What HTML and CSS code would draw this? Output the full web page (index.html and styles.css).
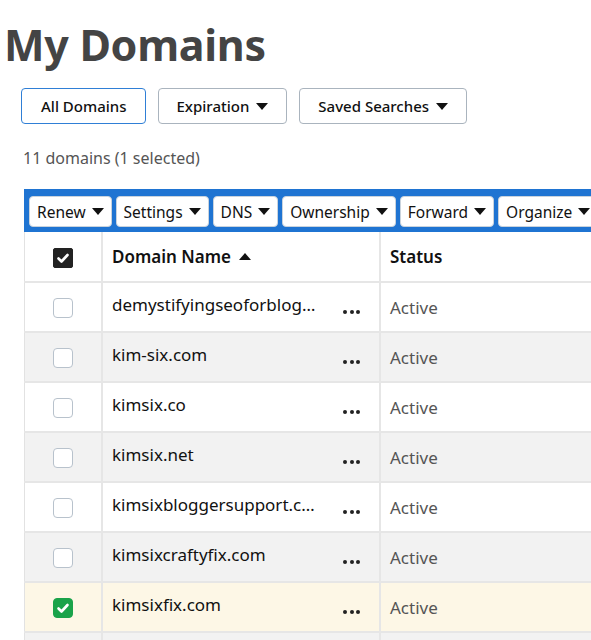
FILE: index.html
```html
<!DOCTYPE html>
<html lang="en">

<head>
    <meta charset="UTF-8">
    <meta name="viewport" content="width=device-width, initial-scale=1.0">
    <title>My Domains</title>
    <link rel="stylesheet" href="styles.css">
</head>

<body>

    <h1 class="page-title">My Domains</h1>

    <div class="filters">
        <button class="filter-btn active">All Domains</button>
        <button class="filter-btn">Expiration <span class="caret"></span></button>
        <button class="filter-btn">Saved Searches <span class="caret"></span></button>
    </div>

    <p class="count">11 domains (1 selected)</p>

    <div class="domains">
        <div class="toolbar">
            <button class="tool-btn">Renew <span class="caret"></span></button>
            <button class="tool-btn">Settings <span class="caret"></span></button>
            <button class="tool-btn">DNS <span class="caret"></span></button>
            <button class="tool-btn">Ownership <span class="caret"></span></button>
            <button class="tool-btn">Forward <span class="caret"></span></button>
            <button class="tool-btn">Organize <span class="caret"></span></button>
        </div>

        <table class="domain-table">
            <thead>
                <tr>
                    <th class="col-check"><span class="box box-all"><svg viewBox="0 0 20 20"><path d="M5.5 10.5l3 3 6-6.5" /></svg></span></th>
                    <th class="col-name">Domain Name <span class="caret up"></span></th>
                    <th class="col-status">Status</th>
                </tr>
            </thead>
            <tbody>
                <tr>
                    <td class="col-check"><span class="box"></span></td>
                    <td class="col-name"><div class="name-cell"><span class="name">demystifyingseoforblog…</span><span class="dots"><i></i><i></i><i></i></span></div></td>
                    <td class="col-status">Active</td>
                </tr>
                <tr class="alt">
                    <td class="col-check"><span class="box"></span></td>
                    <td class="col-name"><div class="name-cell"><span class="name">kim&#8209;six.com</span><span class="dots"><i></i><i></i><i></i></span></div></td>
                    <td class="col-status">Active</td>
                </tr>
                <tr>
                    <td class="col-check"><span class="box"></span></td>
                    <td class="col-name"><div class="name-cell"><span class="name">kimsix.co</span><span class="dots"><i></i><i></i><i></i></span></div></td>
                    <td class="col-status">Active</td>
                </tr>
                <tr class="alt">
                    <td class="col-check"><span class="box"></span></td>
                    <td class="col-name"><div class="name-cell"><span class="name">kimsix.net</span><span class="dots"><i></i><i></i><i></i></span></div></td>
                    <td class="col-status">Active</td>
                </tr>
                <tr>
                    <td class="col-check"><span class="box"></span></td>
                    <td class="col-name"><div class="name-cell"><span class="name">kimsixbloggersupport.c…</span><span class="dots"><i></i><i></i><i></i></span></div></td>
                    <td class="col-status">Active</td>
                </tr>
                <tr class="alt">
                    <td class="col-check"><span class="box"></span></td>
                    <td class="col-name"><div class="name-cell"><span class="name">kimsixcraftyfix.com</span><span class="dots"><i></i><i></i><i></i></span></div></td>
                    <td class="col-status">Active</td>
                </tr>
                <tr class="selected">
                    <td class="col-check"><span class="box box-on"><svg viewBox="0 0 20 20"><path d="M5.5 10.5l3 3 6-6.5" /></svg></span></td>
                    <td class="col-name"><div class="name-cell"><span class="name">kimsixfix.com</span><span class="dots"><i></i><i></i><i></i></span></div></td>
                    <td class="col-status">Active</td>
                </tr>
                <tr class="alt">
                    <td class="col-check"></td>
                    <td class="col-name"></td>
                    <td class="col-status"></td>
                </tr>
            </tbody>
        </table>
    </div>

</body>

</html>
```

FILE: styles.css
```css
body {
    font-family: "Noto Sans", Arial, sans-serif;
    background-color: #fff;
    color: #111;
    margin: 0;
    padding: 0 0 0 4px;
    overflow: hidden;
}

.page-title {
    font-size: 43px;
    font-weight: 700;
    color: #444;
    margin: 16px 0 0 0;
    line-height: 58px;
    letter-spacing: -0.3px;
}

.filters {
    display: flex;
    gap: 12px;
    margin: 14px 0 0 17px;
}

.filter-btn {
    font-family: inherit;
    font-size: 15px;
    font-weight: 500;
    color: #111;
    background: #fff;
    border: 1px solid #aab4be;
    border-radius: 4px;
    height: 36px;
    padding: 0 18px;
    display: flex;
    align-items: center;
    gap: 7px;
}

.filter-btn.active {
    border-color: #2f7fd6;
    padding: 0 18px 0 19px;
}

.caret {
    display: inline-block;
    width: 0;
    height: 0;
    border-left: 6px solid transparent;
    border-right: 6px solid transparent;
    border-top: 7px solid #111;
}

.caret.up {
    border-top: none;
    border-bottom: 7px solid #111;
    margin-left: 4px;
    vertical-align: 3px;
}

.count {
    font-size: 16px;
    color: #555;
    margin: 22px 0 0 19px;
    line-height: 24px;
}

.domains {
    margin: 19px 0 0 20px;
}

.toolbar {
    background-color: #1f74d2;
    display: flex;
    gap: 4px;
    padding: 7px 5px 5px 5px;
    height: 31px;
    white-space: nowrap;
}

.tool-btn {
    font-family: inherit;
    font-size: 15.5px;
    color: #111;
    background: #fff;
    border: 1px solid #c9d3dd;
    border-radius: 4px;
    height: 31px;
    padding: 0 7px;
    display: flex;
    align-items: center;
    gap: 6px;
    flex-shrink: 0;
}

.domain-table {
    width: 620px;
    border-collapse: collapse;
    table-layout: fixed;
}

.domain-table th,
.domain-table td {
    height: 48px;
    padding: 0;
    border-top: 2px solid #e6e6e6;
    text-align: left;
    vertical-align: middle;
}

.domain-table thead th {
    border-top: none;
    height: 49px;
    font-size: 17px;
    font-weight: 600;
    color: #111;
}

.col-check {
    width: 76px;
    text-align: center !important;
    border-left: 1px solid #e2e2e2;
    border-right: 2px solid #e6e6e6;
}

.col-name {
    width: 267px;
    padding-left: 9px !important;
    border-right: 2px solid #e6e6e6;
}

.col-status {
    padding-left: 9px !important;
    font-size: 17px;
    color: #555;
}

.domain-table thead .col-status {
    color: #111;
}

tr.alt td {
    background-color: #f2f2f2;
}

tr.selected td {
    background-color: #fdf7e6;
}

.box {
    display: inline-block;
    width: 20px;
    height: 20px;
    box-sizing: border-box;
    border: 1px solid #b8c2cc;
    border-radius: 4px;
    background: #fff;
    vertical-align: middle;
}

.box svg {
    display: block;
    width: 20px;
    height: 20px;
    margin: -1px;
}

.box svg path {
    fill: none;
    stroke: #fff;
    stroke-width: 2.6;
    stroke-linecap: round;
    stroke-linejoin: round;
}

.box-all {
    background: #222;
    border-color: #222;
    border-radius: 2px;
}

.box-on {
    background: #1aa34a;
    border-color: #1aa34a;
}

.name-cell {
    display: flex;
    align-items: center;
}

.name {
    font-size: 17px;
    color: #111;
    width: 208px;
    white-space: nowrap;
    margin-top: -5px;
}

.dots {
    display: flex;
    gap: 2.5px;
    margin: 10px 0 0 23px;
}

.dots i {
    width: 4px;
    height: 4px;
    border-radius: 50%;
    background: #222;
}
```
